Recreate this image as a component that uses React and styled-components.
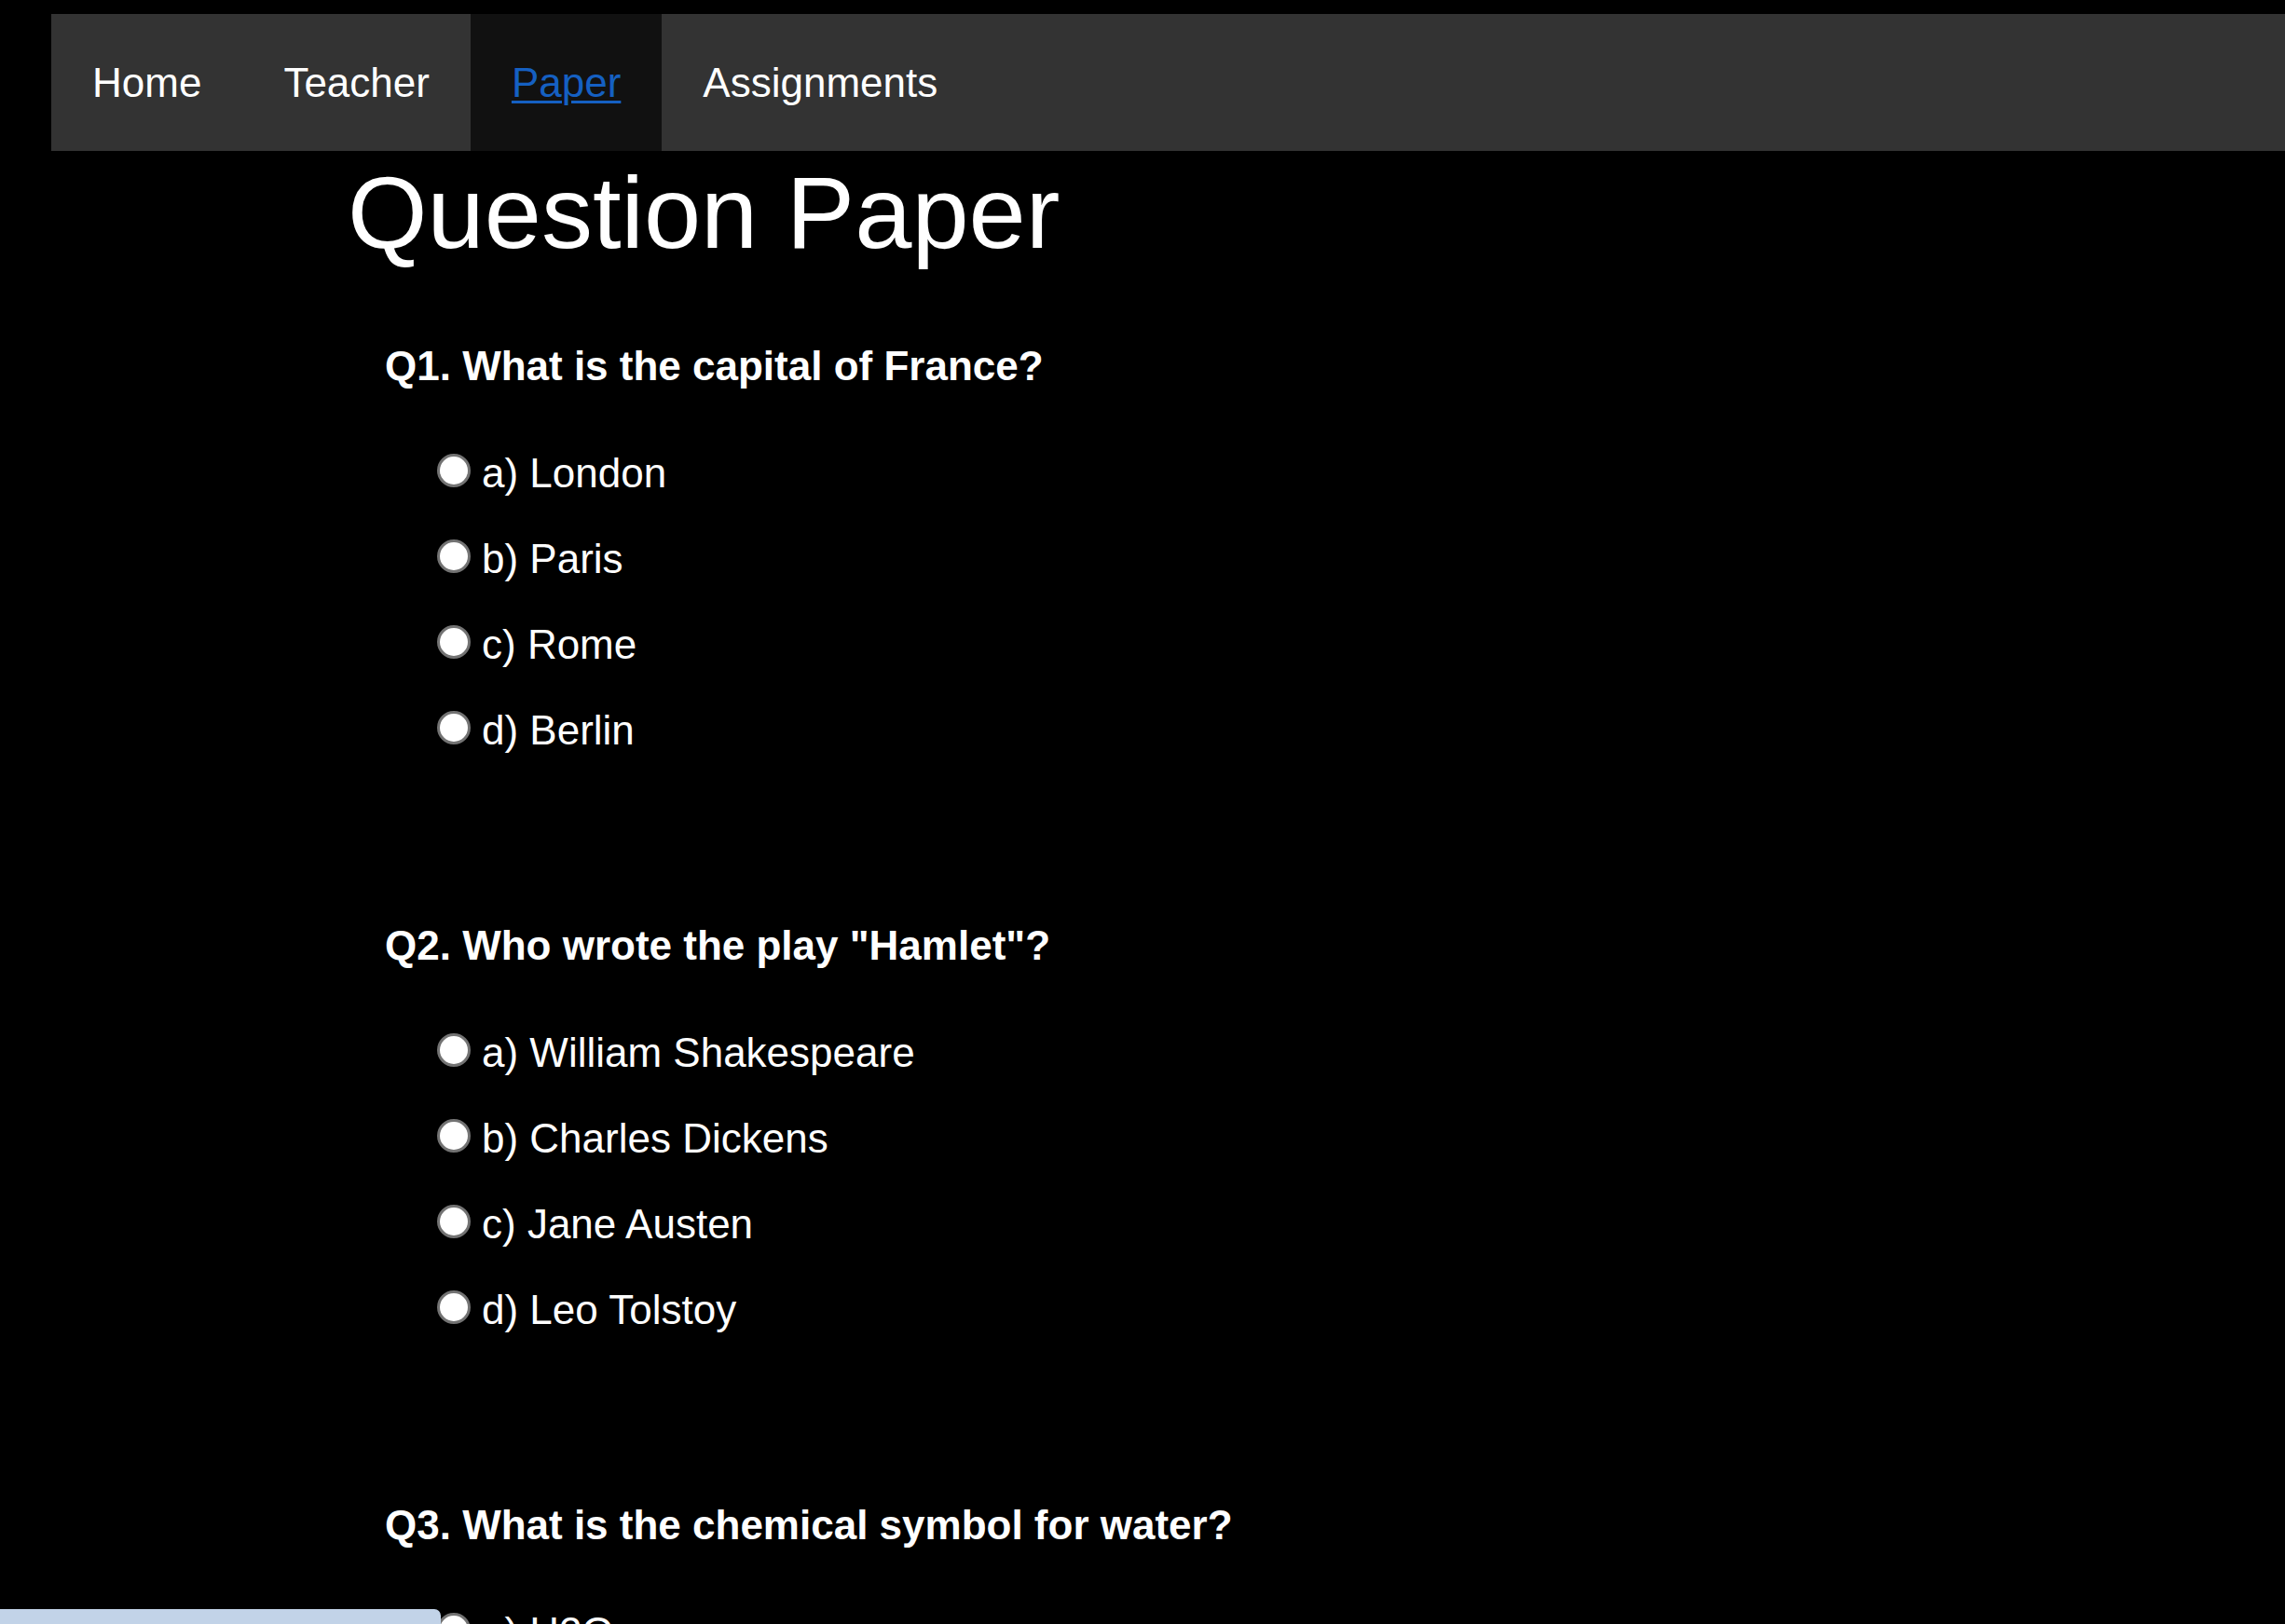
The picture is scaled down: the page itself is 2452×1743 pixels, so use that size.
import React from 'react';
import styled, { createGlobalStyle } from 'styled-components';

const GlobalStyle = createGlobalStyle`
  html, body {
    margin: 0;
    padding: 0;
    background: #000;
    color: #fff;
    font-family: "Liberation Sans", Arial, sans-serif;
  }
`;

const Nav = styled.ul`
  display: flex;
  margin: 15px 0 0 55px;
  padding: 0;
  list-style: none;
  height: 147px;
  background: #333;
`;

const NavItem = styled.li`
  background: ${(props) => (props.active ? '#111' : 'transparent')};
`;

const NavLink = styled.a`
  display: block;
  padding: 0 44px;
  line-height: 147px;
  font-size: 44px;
  color: ${(props) => (props.active ? '#1560c2' : '#fff')};
  text-decoration: ${(props) => (props.active ? 'underline' : 'none')};
  text-decoration-thickness: 3px;
  text-underline-offset: 4px;
`;

const Main = styled.main`
  padding-left: 373px;
`;

const Title = styled.h1`
  margin: 3px 0 0;
  font-size: 110px;
  font-weight: 400;
  line-height: 126px;
`;

const Question = styled.section`
  margin: 76px 0 180px 40px;
`;

const Heading = styled.h3`
  margin: 0;
  font-size: 44px;
  font-weight: 700;
  line-height: 51px;
`;

const Options = styled.div`
  display: flex;
  flex-direction: column;
  gap: 41px;
  margin-top: 64px;
  padding-left: 56px;
`;

const Option = styled.label`
  display: flex;
  align-items: flex-start;
  height: 51px;
  font-size: 44px;
  line-height: 51px;
`;

const Radio = styled.input.attrs({ type: 'radio' })`
  appearance: none;
  box-sizing: border-box;
  flex: none;
  width: 36px;
  height: 36px;
  margin: 5px 12px 0 0;
  border-radius: 50%;
  border: 3px solid #737373;
  background: #fff;
`;

const StatusBubble = styled.div`
  position: fixed;
  left: 0;
  bottom: 0;
  width: 473px;
  height: 16px;
  background: #c2d3e8;
  border-top-right-radius: 7px;
`;

const questions = [
  {
    id: 'q1',
    text: 'Q1. What is the capital of France?',
    options: ['a) London', 'b) Paris', 'c) Rome', 'd) Berlin'],
  },
  {
    id: 'q2',
    text: 'Q2. Who wrote the play "Hamlet"?',
    options: [
      'a) William Shakespeare',
      'b) Charles Dickens',
      'c) Jane Austen',
      'd) Leo Tolstoy',
    ],
  },
  {
    id: 'q3',
    text: 'Q3. What is the chemical symbol for water?',
    options: ['a) H2O', 'b) CO2', 'c) NaCl', 'd) O2'],
  },
];

const links = ['Home', 'Teacher', 'Paper', 'Assignments'];

export default function App() {
  return (
    <>
      <GlobalStyle />
      <Nav>
        {links.map((name) => (
          <NavItem key={name} active={name === 'Paper'}>
            <NavLink href="#" active={name === 'Paper'}>
              {name}
            </NavLink>
          </NavItem>
        ))}
      </Nav>
      <Main>
        <Title>Question Paper</Title>
        {questions.map((q) => (
          <Question key={q.id}>
            <Heading>{q.text}</Heading>
            <Options>
              {q.options.map((opt) => (
                <Option key={opt}>
                  <Radio name={q.id} />
                  {opt}
                </Option>
              ))}
            </Options>
          </Question>
        ))}
      </Main>
      <StatusBubble />
    </>
  );
}
